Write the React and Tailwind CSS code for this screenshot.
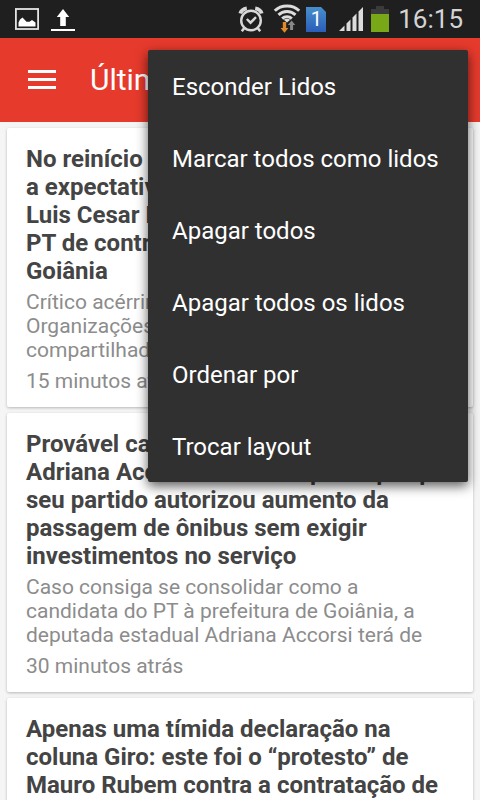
import React from 'react';

const menuItems = [
  'Esconder Lidos',
  'Marcar todos como lidos',
  'Apagar todos',
  'Apagar todos os lidos',
  'Ordenar por',
  'Trocar layout'
];

const articles = [
  {
    id: 1,
    title: 'No reinício dos trabalhos\na expectativa é se\nLuis Cesar Bueno e o\nPT de contratação em\nGoiânia',
    summary: 'Crítico acérrimo das\nOrganizações Sociais\ncompartilhadas com',
    time: '15 minutos atrás'
  },
  {
    id: 2,
    title: 'Provável candidata\nAdriana Accorsi terá de explicar porque\nseu partido autorizou aumento da\npassagem de ônibus sem exigir\ninvestimentos no serviço',
    summary: 'Caso consiga se consolidar como a\ncandidata do PT à prefeitura de Goiânia, a\ndeputada estadual Adriana Accorsi terá de',
    time: '30 minutos atrás'
  },
  {
    id: 3,
    title: 'Apenas uma tímida declaração na\ncoluna Giro: este foi o “protesto” de\nMauro Rubem contra a contratação de',
    summary: '',
    time: ''
  }
];

function StatusBar() {
  return (
    <div className="flex h-[38px] shrink-0 items-center justify-between bg-[#1f1f1f] pr-[17px] pl-[15px]">
      <div className="flex items-center gap-3">
        {/* Screenshot saved */}
        <svg width="24" height="24" viewBox="0 0 24 24">
          <rect x="0.9" y="2" width="22.2" height="20" fill="none" stroke="#e4e4e4" strokeWidth="1.8" />
          <path d="M3.500 19.500v-4l1.500-3 2.500-2 4 4.200h3l2.500-1.700 3.500 2.500v4z" fill="#fff" />
        </svg>
        {/* Upload done */}
        <svg width="24" height="24" viewBox="0 0 24 24">
          <path d="M12 2l6.200 8h-3.400v9H9.200v-9H5.800z" fill="#fff" />
          <path d="M0 22h24v2H0z" fill="#fff" />
        </svg>
      </div>

      <div className="flex items-center">
        {/* Alarm */}
        <svg width="26" height="28" viewBox="0 0 26 28" fill="none" stroke="#d8d8d8">
          <circle cx="13" cy="15.500" r="9.800" strokeWidth="2.400" />
          <path d="M8.800 14l3.700 3.700 5.500-5.500" strokeWidth="2.400" />
          <path d="M2.300 8.500C3 6 5.500 3.800 8.800 3.300M23.700 8.500C23 6 20.500 3.800 17.200 3.300" strokeWidth="3.800" />
          <path d="M6.500 22.800l-2.700 3.400M19.500 22.800l2.700 3.400" strokeWidth="2.600" />
        </svg>
        {/* Wifi with traffic arrows */}
        <svg className="ml-[9px]" width="28" height="30" viewBox="0 0 28 30" fill="none">
          <g stroke="#dcdcdc" strokeWidth="3">
            <path d="M1.800 6.800C8.200 0.500 19.800 0.500 26.200 6.800" />
            <path d="M5.500 10.800c4.700-4.500 12.300-4.500 17 0" />
            <path d="M9.200 14.600c2.700-2.500 6.900-2.500 9.600 0" />
          </g>
          <path d="M14 18.500l-3.200-2.800c1.900-1.400 4.500-1.400 6.400 0z" fill="#dcdcdc" />
          <path d="M9.800 18h3.400v6h2.200l-3.900 4.800-3.900-4.800h2.200z" fill="#e08a28" />
          <path d="M18.600 16.500l3.700 4.500h-2.200v5h-3v-5h-2.200z" fill="#888" />
        </svg>
        {/* SIM 1 */}
        <div className="relative ml-[5px] flex h-[25px] w-5 items-center justify-center text-[20px] leading-none text-white">
          <svg className="absolute inset-0" width="20" height="25" viewBox="0 0 20 25">
            <defs>
              <linearGradient id="sim" x1="0" y1="0" x2="0" y2="1">
                <stop offset="0" stopColor="#4790cb" />
                <stop offset="1" stopColor="#2a5db9" />
              </linearGradient>
            </defs>
            <path d="M0 0h15l5 5v20H0z" fill="url(#sim)" />
          </svg>
          <span className="relative">1</span>
        </div>
        {/* Signal */}
        <svg className="ml-[13px]" width="24" height="24" viewBox="0 0 24 24" fill="#dcdcdc">
          <path d="M0 24l5.500-5.500V24zM7.500 24v-7.500l4-4V24zM13.500 24V10.500l4-4V24zM19.500 24V4.500L24 0v24z" />
        </svg>
        {/* Battery */}
        <svg className="ml-2" width="18" height="26" viewBox="0 0 18 26">
          <path d="M5 0h8v3h5v5H0V3h5z" fill="#3b3b3b" />
          <path d="M0 8h18v18H0z" fill="#78a818" />
        </svg>
        <span className="ml-[9px] text-[26px] leading-none text-[#d4d4d4]">16:15</span>
      </div>
    </div>
  );
}

function ArticleCard({ article }) {
  return (
    <article className="rounded-xs bg-white px-[19px] pt-[17px] pb-[14px] shadow-[0_1px_3px_rgba(0,0,0,0.25)]">
      <h2 className="text-[24px] leading-7 font-bold whitespace-pre text-[#444]">{article.title}</h2>
      {article.summary && (
        <p className="mt-[5px] text-[21px] leading-6 whitespace-pre text-[#8c8c8c]">{article.summary}</p>
      )}
      {article.time && <p className="mt-[7px] text-[21px] leading-6 text-[#8c8c8c]">{article.time}</p>}
    </article>
  );
}

export default function App() {
  return (
    <div className="relative flex h-screen flex-col overflow-hidden bg-[#f5f5f5] font-['Roboto',sans-serif]">
      <StatusBar />

      <header className="flex h-[84px] shrink-0 items-center bg-[#e53a2c] pl-7 text-white">
        <button type="button" aria-label="Menu" className="flex h-5 w-7 flex-col gap-[5px]">
          <span className="h-[3px] w-full bg-white"></span>
          <span className="h-[3px] w-full bg-white"></span>
          <span className="h-[3px] w-full bg-white"></span>
        </button>
        <h1 className="ml-[34px] text-[30px] leading-9 whitespace-nowrap">Últimas</h1>
      </header>

      <main className="flex flex-1 flex-col gap-1.5 overflow-hidden px-[7px] pt-1.5">
        {articles.map(article => (
          <div key={article.id} className="shrink-0">
            <ArticleCard article={article} />
          </div>
        ))}
      </main>

      {/* Overflow menu */}
      <div
        role="menu"
        className="absolute top-[50px] right-3 w-80 rounded-xs bg-[#303030] shadow-[0_4px_12px_rgba(0,0,0,0.65)]"
      >
        {menuItems.map(item => (
          <button
            key={item}
            type="button"
            role="menuitem"
            className="flex h-[72px] w-full items-center px-6 pt-0.5 text-left text-[24px] whitespace-nowrap text-white"
          >
            {item}
          </button>
        ))}
      </div>
    </div>
  );
}
